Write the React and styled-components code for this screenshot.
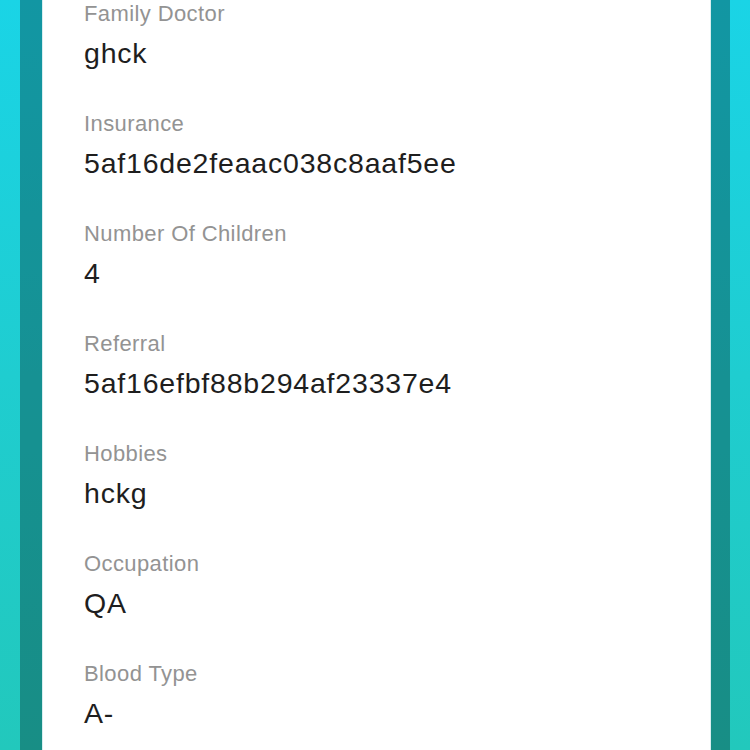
import React from 'react';
import styled, { createGlobalStyle } from 'styled-components';

const GlobalStyle = createGlobalStyle`
  html, body {
    margin: 0;
    padding: 0;
    height: 100%;
  }
  body {
    background: linear-gradient(180deg, #1ad4e6 0%, #1fcdd0 50%, #22c8bc 100%);
    font-family: "Liberation Sans", Arial, Helvetica, sans-serif;
    overflow: hidden;
  }
  #root {
    height: 100%;
  }
`;

const Page = styled.div`
  height: 750px;
  padding: 0 20px 0 20px;
  box-sizing: border-box;
  display: flex;
`;

const Frame = styled.div`
  flex: 1;
  background: rgba(0, 0, 0, 0.29);
  padding: 0 19px 0 22px;
  display: flex;
`;

const Card = styled.div`
  flex: 1;
  background: #ffffff;
  border-left: 1px solid #d8eef0;
  border-right: 1px solid #d8eef0;
  padding: 0 41px;
  overflow: hidden;
`;

const List = styled.div`
  margin-top: -1px;
  display: flex;
  flex-direction: column;
  gap: 36px;
`;

const Field = styled.div`
  display: flex;
  flex-direction: column;
  gap: 4px;
`;

const Label = styled.div`
  font-size: 22px;
  line-height: 30px;
  color: #939393;
  letter-spacing: 0.4px;
`;

const Value = styled.div`
  font-size: 28.5px;
  line-height: 40px;
  color: #1e1e1e;
  letter-spacing: 0.8px;
`;

const fields = [
  ['Family Doctor', 'ghck'],
  ['Insurance', '5af16de2feaac038c8aaf5ee'],
  ['Number Of Children', '4'],
  ['Referral', '5af16efbf88b294af23337e4'],
  ['Hobbies', 'hckg'],
  ['Occupation', 'QA'],
  ['Blood Type', 'A-'],
];

export default function App() {
  return (
    <>
      <GlobalStyle />
      <Page>
        <Frame>
          <Card>
            <List>
              {fields.map(([label, value]) => (
                <Field key={label}>
                  <Label>{label}</Label>
                  <Value>{value}</Value>
                </Field>
              ))}
            </List>
          </Card>
        </Frame>
      </Page>
    </>
  );
}
